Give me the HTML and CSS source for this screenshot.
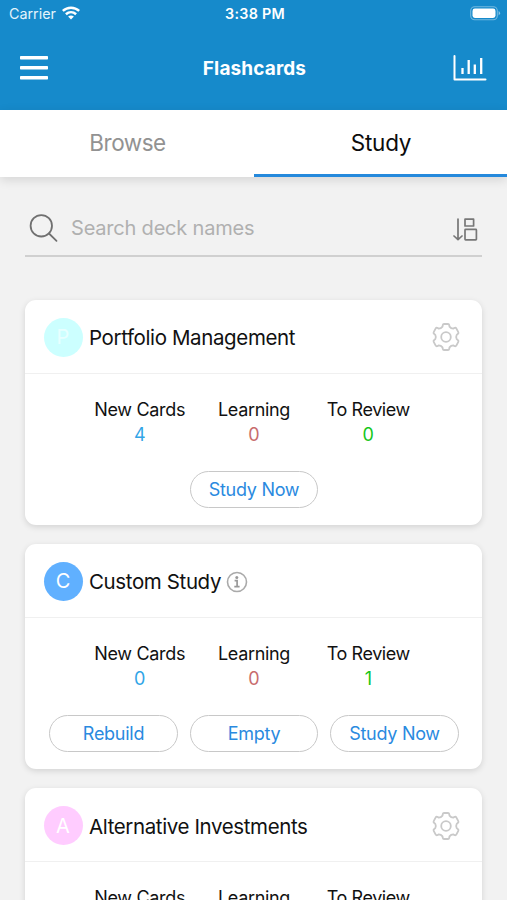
FILE: index.html
```html
<!DOCTYPE html>
<html lang="en">
<head>
<meta charset="utf-8">
<title>Flashcards</title>
<link rel="stylesheet" href="styles.css">
</head>
<body>
<svg class="defs" width="0" height="0">
  <symbol id="gear" viewBox="-15 -15 30 30">
    <g fill="none" stroke="currentColor" stroke-width="1.8" stroke-linejoin="round">
      <path d="M-2 -13H2Q3 -13 3.2 -12L3.5 -10.4Q5 -8.4 7.2 -8.4L8.8 -9.2Q9.8 -9.5 10.3 -8.6L12.3 -4.8Q12.8 -3.9 12 -3.2L10.7 -2.1Q9.6 0 10.7 2.1L12 3.2Q12.8 3.9 12.3 4.8L10.3 8.6Q9.8 9.5 8.8 9.2L7.2 8.4Q5 8.4 3.5 10.4L3.2 12Q3 13 2 13H-2Q-3 13 -3.2 12L-3.5 10.4Q-5 8.4 -7.2 8.4L-8.8 9.2Q-9.8 9.5 -10.3 8.6L-12.3 4.8Q-12.8 3.9 -12 3.2L-10.7 2.1Q-9.6 0 -10.7 -2.1L-12 -3.2Q-12.8 -3.9 -12.3 -4.8L-10.3 -8.6Q-9.8 -9.5 -8.8 -9.2L-7.2 -8.4Q-5 -8.4 -3.5 -10.4L-3.2 -12Q-3 -13 -2 -13Z"/>
      <circle r="4.8"/>
    </g>
  </symbol>
</svg>
<div class="screen">
  <header class="top">
    <div class="status">
      <div class="carrier"><span>Carrier</span>
        <svg width="18" height="14" viewBox="0 0 18 14"><g fill="none" stroke="#fff" stroke-width="2.5"><path d="M.8 4.9C5.4 .6 12.6 .6 17.2 4.9"/><path d="M3.9 8.3C7 5.5 11 5.5 14.1 8.3"/></g><path d="M9 13.5L6.1 10.6Q9 8.3 11.9 10.6Z" fill="#fff"/></svg>
      </div>
      <div class="time">3:38 PM</div>
      <svg class="battery" width="31" height="15" viewBox="0 0 31 15"><rect x=".7" y=".7" width="26.6" height="13" rx="4" fill="none" stroke="#fff" stroke-opacity=".4" stroke-width="1.1"/><rect x="2.5" y="2.5" width="23" height="9.4" rx="2.4" fill="#fff"/><path d="M28.6 5Q31.6 7.2 28.6 9.4Z" fill="#fff" fill-opacity=".5"/></svg>
    </div>
    <div class="nav">
      <svg width="28" height="26" viewBox="0 0 28 26" fill="#fff"><rect y="1" width="28" height="3.4" rx=".7"/><rect y="11" width="28" height="3.4" rx=".7"/><rect y="21" width="28" height="3.4" rx=".7"/></svg>
      <h1>Flashcards</h1>
      <svg class="chart" width="34" height="28" viewBox="0 0 34 28" fill="none" stroke="#fff" stroke-linecap="round" stroke-linejoin="round"><path stroke-width="2" d="M1.5 2V25.5H32.5"/><path stroke-width="2.3" stroke-linecap="butt" d="M9.5 14V20M15.7 6V20M21.8 10.5V20M28.2 4V20"/></svg>
    </div>
  </header>
  <nav class="tabs"><div class="tab browse"><span>Browse</span></div><div class="tab active"><span>Study</span></div></nav>
  <main>
    <div class="search">
      <svg width="30" height="30" viewBox="0 0 30 30" fill="none" stroke="#707070" stroke-width="1.8" stroke-linecap="round"><circle cx="12.3" cy="12.8" r="10.7"/><path d="M20 20.5L27.5 27.8"/></svg>
      <span class="placeholder">Search deck names</span>
      <svg class="sort" width="26" height="24" viewBox="0 0 26 24" fill="none" stroke="#777" stroke-width="1.7" stroke-linecap="round" stroke-linejoin="round"><path d="M5 1V21.5M1 18L5 21.7L9 18"/><rect x="12" y="1.2" width="8.6" height="6.8"/><rect x="12" y="11.4" width="11.4" height="10.4" rx=".6"/></svg>
    </div>

    <section class="card">
      <div class="head"><span class="avatar cyan">P</span><h2>Portfolio Management</h2><svg class="gear"><use href="#gear"/></svg></div>
      <div class="stats">
        <div><span class="new">New Cards</span><b class="blue">4</b></div>
        <div><span class="learn">Learning</span><b class="red">0</b></div>
        <div><span class="review">To Review</span><b class="green">0</b></div>
      </div>
      <div class="actions"><span class="button">Study Now</span></div>
    </section>

    <section class="card">
      <div class="head"><span class="avatar azure">C</span><h2>Custom Study</h2>
        <svg class="info" width="22" height="22" viewBox="0 0 22 22"><circle cx="11" cy="11" r="9.5" fill="none" stroke="#aaa" stroke-width="1.6"/><circle cx="10.8" cy="6.6" r="1.5" fill="#999"/><path d="M8.6 9.7H11.1V15.5M8.3 15.6H13.6" fill="none" stroke="#999" stroke-width="1.7"/></svg>
      </div>
      <div class="stats">
        <div><span class="new">New Cards</span><b class="blue">0</b></div>
        <div><span class="learn">Learning</span><b class="red">0</b></div>
        <div><span class="review">To Review</span><b class="green">1</b></div>
      </div>
      <div class="actions"><span class="button">Rebuild</span><span class="button">Empty</span><span class="button">Study Now</span></div>
    </section>

    <section class="card last">
      <div class="head"><span class="avatar pink">A</span><h2>Alternative Investments</h2><svg class="gear"><use href="#gear"/></svg></div>
      <div class="stats">
        <div><span class="new">New Cards</span></div>
        <div><span class="learn">Learning</span></div>
        <div><span class="review">To Review</span></div>
      </div>
    </section>
  </main>
</div>
</body>
</html>
```
FILE: styles.css
```css
* { box-sizing: border-box; }
body { margin: 0; font-family: Inter, "Liberation Sans", sans-serif; background: #f2f2f2; color: #111; }
h1, h2 { margin: 0; }
svg { display: block; flex: none; }
.defs { position: absolute; }
.screen { width: 507px; height: 900px; overflow: hidden; }
.top { height: 110px; background: #168acb; color: #fff; }
.status { height: 27px; display: grid; grid-template-columns: 1fr auto 1fr; align-items: center; padding: 0 6px 0 9px; }
.carrier { display: flex; align-items: center; gap: 6px; font-size: 14.3px; color: #e4f4fb; }
.carrier svg { margin-top: -1px; }
.time { font-size: 14.3px; font-weight: 600; letter-spacing: .3px; }
.battery { justify-self: end; }
.nav { height: 82px; display: grid; grid-template-columns: 1fr auto 1fr; align-items: center; padding: 0 20px; }
.nav h1 { font-size: 19px; font-weight: 700; line-height: 24px; letter-spacing: .12px; padding: 1px 0 0 2px; }
.chart { justify-self: end; }
.tabs { position: relative; height: 67px; display: grid; grid-template-columns: 254px 253px; background: #fff; box-shadow: 0 3px 10px rgba(0,0,0,.12); }
.tab { display: flex; align-items: center; justify-content: center; padding-top: 1px; font-size: 22.5px; letter-spacing: -.2px; color: #929292; border-bottom: 3px solid transparent; }
.tab.browse { padding-left: 1px; letter-spacing: -.5px; }
.tab.active { padding-left: 1px; color: #0c0c0c; border-color: #2589dc; }
main { padding: 23px 25px 0; }
.search { height: 57px; display: flex; align-items: center; padding: 0 3px 0 4px; border-bottom: 2px solid #d0d0d0; }
.placeholder { flex: 1; margin-left: 12px; font-size: 20px; letter-spacing: -.2px; color: #b0b0b0; padding-top: 1px; }
.sort { margin-top: 4px; }
.card { height: 225px; margin-bottom: 19px; background: #fff; border-radius: 11px; box-shadow: 0 2px 6px rgba(0,0,0,.13); }
.search + .card { margin-top: 43px; }
.head { height: 74px; display: flex; align-items: center; padding: 1px 21px 0 18.5px; border-bottom: 1px solid #f0f0f0; }
.last .head { padding-top: 2px; }
.avatar { width: 39px; height: 39px; border-radius: 50%; display: grid; place-items: center; margin-right: 6.5px; font-size: 20px; color: #fff; }
.cyan { background: #ccffff; color: #e8ffff; }
.azure { background: #60b0ff; }
.pink { background: #ffccff; }
h2 { font-size: 20.5px; font-weight: 400; line-height: 28px; letter-spacing: -.38px; white-space: nowrap; padding-top: 2px; }
.gear { width: 30px; height: 30px; margin-left: auto; color: #c9c9c9; }
.info { margin-left: 5px; margin-top: 1px; }
.stats { height: 97px; display: grid; grid-template-columns: repeat(3, 114.3px); justify-content: center; padding: 24px 0 0 1px; text-align: center; font-size: 18px; line-height: 24.5px; white-space: nowrap; }
.stats span, .stats b { display: block; font-weight: 400; }
.stats span { letter-spacing: -.33px; }
.stats .review { letter-spacing: -.42px; }
.blue { color: #32a5e7; }
.red { color: #c86d6d; }
.green { color: #15c61b; }
.actions { display: flex; justify-content: center; gap: 12px; padding-left: 1px; }
.button { width: 128.5px; height: 37px; border: 1.5px solid #c8c8c8; border-radius: 19px; display: grid; place-items: center; font-size: 18px; letter-spacing: -.28px; color: #2a8adf; }
```
